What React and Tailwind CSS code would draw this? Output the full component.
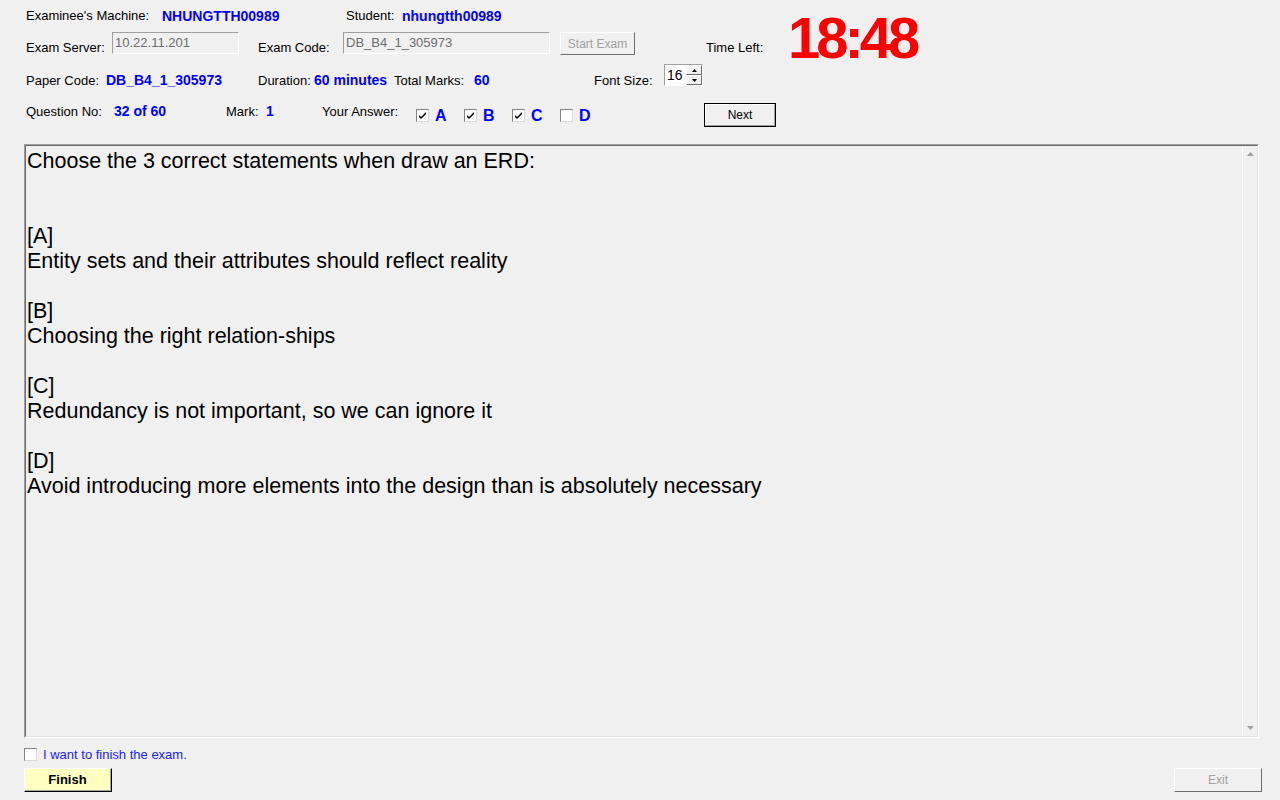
function Check({ checked }) {
  return (
    <span className="flex h-[13px] w-[13px] shrink-0 items-center justify-center border border-t-[#838383] border-l-[#838383] border-b-[#d8d8d8] border-r-[#d8d8d8] bg-white">
      {checked && (
        <svg width="9" height="9" viewBox="0 0 9 9">
          <path d="M1 4 L3 6 L8 1 L8 3 L3 8 L1 6 Z" fill="#000" />
        </svg>
      )}
    </span>
  );
}

function Answer({ letter, checked }) {
  return (
    <div className="flex w-[48px] shrink-0 items-start">
      <div className="mt-[6px]">
        <Check checked={checked} />
      </div>
      <span className="ml-[6px] mt-[4px] text-[16px] font-bold leading-[18px] text-[#0000ff]">
        {letter}
      </span>
    </div>
  );
}

const lines = [
  "Choose the 3 correct statements when draw an ERD:",
  "",
  "",
  "[A]",
  "Entity sets and their attributes should reflect reality",
  "",
  "[B]",
  "Choosing the right relation-ships",
  "",
  "[C]",
  "Redundancy is not important, so we can ignore it",
  "",
  "[D]",
  "Avoid introducing more elements into the design than is absolutely necessary",
];

export default function App() {
  return (
    <div className="h-[800px] w-[1280px] overflow-hidden bg-[#f0f0f0] font-['Liberation_Sans',Arial,sans-serif] text-[13px] leading-[16px] text-black">
      {/* header rows 1-2 + timer */}
      <div className="flex pl-[26px]">
        <div className="w-[680px] shrink-0">
          <div className="mt-[8px] flex h-[16px] whitespace-nowrap">
            <span className="w-[136px] shrink-0">Examinee's Machine:</span>
            <span className="w-[184px] shrink-0 text-[14px] font-bold text-[#0000ff]">NHUNGTTH00989</span>
            <span className="w-[56px] shrink-0">Student:</span>
            <span className="text-[14px] font-bold text-[#0000ff]">nhungtth00989</span>
          </div>
          <div className="mt-[8px] flex h-[24px] items-start whitespace-nowrap">
            <span className="w-[86px] shrink-0 pt-[8px]">Exam Server:</span>
            <div className="h-[22px] w-[127px] shrink-0 border border-t-[#a0a0a0] border-l-[#a0a0a0] border-b-white border-r-white bg-[#f0f0f0] pl-[2px] pt-[2px] text-[#6d6d6d]">
              10.22.11.201
            </div>
            <span className="ml-[19px] w-[85px] shrink-0 pt-[8px]">Exam Code:</span>
            <div className="h-[22px] w-[207px] shrink-0 border border-t-[#a0a0a0] border-l-[#a0a0a0] border-b-white border-r-white bg-[#f0f0f0] pl-[2px] pt-[2px] text-[#6d6d6d]">
              DB_B4_1_305973
            </div>
            <button className="ml-[10px] flex h-[23px] w-[75px] shrink-0 items-center justify-center border border-t-white border-l-white border-b-[#6d6d6d] border-r-[#6d6d6d] bg-[#f0f0f0] text-[12px] text-[#a0a0a0]">
              Start Exam
            </button>
          </div>
        </div>
        <span className="w-[82px] shrink-0 whitespace-nowrap pt-[40px]">Time Left:</span>
        <span className="mt-[9px] text-[58px] font-bold leading-[58px] tracking-[-4px] text-[#ff0000]">
          18:48
        </span>
      </div>

      {/* row 3 */}
      <div className="mt-[-3px] flex h-[22px] items-start whitespace-nowrap pl-[26px]">
        <span className="w-[80px] shrink-0 pt-[9px]">Paper Code:</span>
        <span className="w-[152px] shrink-0 pt-[8px] text-[14px] font-bold text-[#0000ff]">DB_B4_1_305973</span>
        <span className="w-[56px] shrink-0 pt-[9px]">Duration:</span>
        <span className="w-[80px] shrink-0 pt-[8px] text-[14px] font-bold text-[#0000ff]">60 minutes</span>
        <span className="w-[80px] shrink-0 pt-[9px]">Total Marks:</span>
        <span className="w-[120px] shrink-0 pt-[8px] text-[14px] font-bold text-[#0000ff]">60</span>
        <span className="w-[70px] shrink-0 pt-[9px]">Font Size:</span>
        <div className="flex h-[22px] w-[39px] shrink-0 border border-t-[#a0a0a0] border-l-[#a0a0a0] border-b-white border-r-white bg-white">
          <span className="flex-1 pl-[2px] pt-[2px] text-[14px]">16</span>
          <div className="flex w-[16px] flex-col">
            <div className="flex h-[10px] items-center justify-center border border-t-white border-l-white border-b-[#6d6d6d] border-r-[#6d6d6d] bg-[#f0f0f0]">
              <svg width="5" height="3" viewBox="0 0 5 3"><path d="M2.5 0 L5 3 L0 3 Z" fill="#000" /></svg>
            </div>
            <div className="flex h-[10px] items-center justify-center border border-t-white border-l-white border-b-[#6d6d6d] border-r-[#6d6d6d] bg-[#f0f0f0]">
              <svg width="5" height="3" viewBox="0 0 5 3"><path d="M0 0 L5 0 L2.5 3 Z" fill="#000" /></svg>
            </div>
          </div>
        </div>
      </div>

      {/* row 4 */}
      <div className="mt-[17px] flex h-[24px] items-start whitespace-nowrap pl-[26px]">
        <span className="w-[88px] shrink-0 pt-[1px]">Question No:</span>
        <span className="w-[112px] shrink-0 text-[14px] font-bold text-[#0000ff]">32 of 60</span>
        <span className="w-[40px] shrink-0 pt-[1px]">Mark:</span>
        <span className="w-[56px] shrink-0 text-[14px] font-bold text-[#0000ff]">1</span>
        <span className="w-[94px] shrink-0 pt-[1px]">Your Answer:</span>
        <Answer letter="A" checked />
        <Answer letter="B" checked />
        <Answer letter="C" checked />
        <Answer letter="D" />
        <button className="ml-[96px] h-[24px] w-[72px] shrink-0 border border-black bg-[#f0f0f0] text-[12px]">
          <span className="flex h-full w-full items-center justify-center border border-t-white border-l-white border-b-[#a0a0a0] border-r-[#a0a0a0]">
            Next
          </span>
        </button>
      </div>

      {/* question box */}
      <div className="ml-[24px] mt-[17px] h-[594px] w-[1235px] border border-t-[#a0a0a0] border-l-[#a0a0a0] border-b-white border-r-white">
        <div className="flex h-full border border-t-[#696969] border-l-[#696969] border-b-[#e3e3e3] border-r-[#e3e3e3]">
          <div className="flex-1 pl-[1px] pt-[3px] text-[21.5px] leading-[25px]">
            {lines.map((t, i) => (
              <div key={i} className="h-[25px] whitespace-pre">
                {t}
              </div>
            ))}
          </div>
          <div className="flex w-[15px] flex-col items-center justify-between border-l border-l-white bg-[#f0f0f0] py-[6px]">
            <svg width="7" height="4" viewBox="0 0 7 4"><path d="M3.5 0 L7 4 L0 4 Z" fill="#a0a0a0" /></svg>
            <svg width="7" height="4" viewBox="0 0 7 4"><path d="M0 0 L7 0 L3.5 4 Z" fill="#a0a0a0" /></svg>
          </div>
        </div>
      </div>

      {/* bottom */}
      <div className="ml-[24px] mt-[10px] flex h-[13px] items-center">
        <Check />
        <span className="ml-[6px] whitespace-nowrap text-[#2020ff]">I want to finish the exam.</span>
      </div>
      <div className="mt-[7px] flex items-start justify-between pl-[24px] pr-[18px]">
        <button className="h-[24px] w-[88px] border border-t-white border-l-white border-b-black border-r-black bg-[#ffffc0] text-[13px] font-bold">
          <span className="flex h-full w-full items-center justify-center border-b border-r border-b-[#a0a0a0] border-r-[#a0a0a0]">
            Finish
          </span>
        </button>
        <button className="h-[24px] w-[88px] border border-t-white border-l-white border-b-[#6d6d6d] border-r-[#6d6d6d] bg-[#f0f0f0] text-[12px] text-[#a0a0a0]">
          Exit
        </button>
      </div>
    </div>
  );
}
